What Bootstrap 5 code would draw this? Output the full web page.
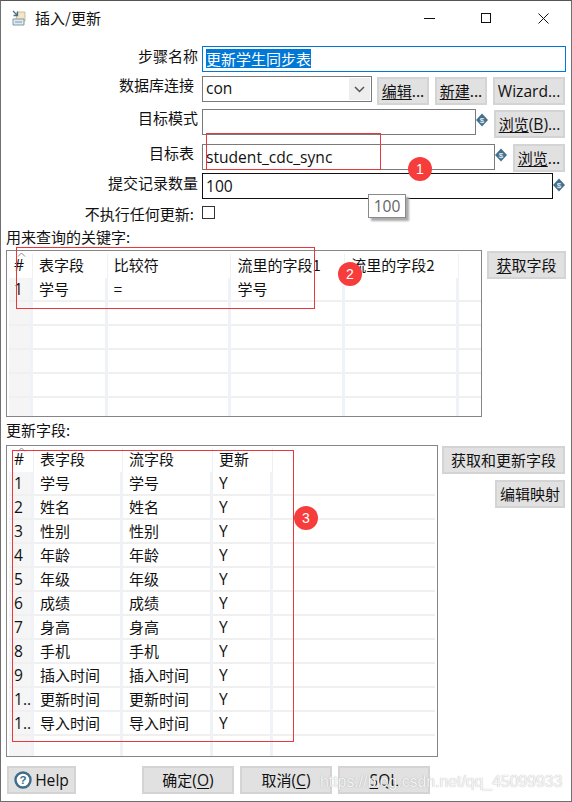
<!DOCTYPE html>
<html lang="zh">
<head>
<meta charset="utf-8">
<title>插入/更新</title>
<link href="https://cdn.jsdelivr.net/npm/bootstrap@5.3.0/dist/css/bootstrap.min.css" rel="stylesheet">
<style>
html,body{margin:0;background:#fff;}
body{font-family:"Noto Sans CJK SC","Open Sans",sans-serif;font-size:15px;line-height:20px;color:#111;overflow:hidden;}
.latin{font-family:"Open Sans","Noto Sans CJK SC",sans-serif;font-size:15.6px;}
.win{position:relative;width:572px;height:802px;border:1px solid #707070;border-top-color:#555;overflow:hidden;background:#fff;}
.tbar{height:45px;padding:9px 0 0 11px;}
.tbar .ttl{margin:-1px 0 0 8px;line-height:18px;font-size:15px;}
.ctl{margin-left:auto;padding:3px 22px 0 0;gap:46px;}
.frow{display:flex;align-items:flex-start;}
.lbl{text-align:right;white-space:nowrap;flex:none;}
.l198{width:197px;margin-right:4px;}
.l194{width:193px;margin-right:8px;}
.up1{margin-top:-1px;}
.up2{margin-top:-2px;}
.fld{height:26px;border:1px solid #7a7a7a;padding:0 3px;line-height:24px;white-space:nowrap;background:#fff;font-size:15px;}
.fld.latin{font-size:15.6px;}
.fld.combo{line-height:22px;}
.fld.act{border-color:#0078d7;}
.fld.blk{border-color:#111;}
.sel{background:#0078d7;color:#fff;display:inline-block;line-height:19px;}
.wbtn.btn{--bs-btn-border-radius:0;background:#e1e1e1;border:2px solid #d4d4d4;color:#111;font-size:15px;line-height:20px;padding:0;height:28px;flex:none;display:flex;align-items:center;justify-content:center;white-space:nowrap;}
.wbtn.btn.latin{font-size:15.6px;}
.wbtn u{text-underline-offset:2px;}
.combo{position:relative;width:170px;display:flex;justify-content:space-between;}
.carr{width:21px;height:22px;margin:1px -2px 0 0;background:#eee;display:flex;align-items:center;justify-content:center;}
.dia{flex:none;}
.r1{height:30px;}.r2{height:33px;}.r3{height:35px;}.r4{height:29px;}.r5{height:33px;}.r6{height:21px;}
.chk{width:13px;height:13px;border:1px solid #333;background:#fff;margin:0;flex:none;}
.sec{padding:0 0 0 5px;line-height:20px;}
.gridbox{position:relative;border:1px solid #85858a;background:#fff;overflow:hidden;flex:none;padding:3px 0 0 2px;}
.gridbox.tight{padding-top:2px;}
table.kt{border-collapse:separate;border-spacing:0;table-layout:fixed;margin:0;font-size:15px;}
table.kt th,table.kt td{padding:0 0 0 6px;font-weight:400;height:24px;line-height:22px;border-right:3px solid #eff2f7;border-bottom:2px solid #f0f0f0;white-space:nowrap;overflow:hidden;color:#111;}
table.kt th{border-bottom:0;border-right:1px solid #f0f0f0;line-height:22px;vertical-align:top;}
table.kt .n{background:#f5f5f5;padding-left:5px;font-family:"Open Sans",sans-serif;font-size:15.6px;}
table.kt th.n{background:#fff;}
table.kt td.y{font-family:"Open Sans",sans-serif;font-size:15.6px;}
table.kt td.e,table.kt th.e{border-right:0;}
.sortmk{position:absolute;left:10px;top:1px;}
.rect{position:absolute;border:1px solid #e8383d;pointer-events:none;}
.bdg{position:absolute;width:24px;height:24px;border-radius:50%;background:#f73c3c;color:#fff;font-size:14px;line-height:24px;text-align:center;font-family:"Liberation Sans",sans-serif;}
.tip{position:absolute;left:367px;top:193px;width:38px;height:24px;border:1px solid #8a8a8a;background:#fff;color:#666;text-align:center;line-height:22px;box-shadow:3px 3px 2px #aaa;}
.wm{position:absolute;left:319px;top:772px;font:15.8px "Liberation Sans",sans-serif;color:rgba(255,255,255,.9);text-shadow:0 0 1px rgba(120,120,120,.7);white-space:nowrap;}
.botbar{padding:0 0 0 6px;}
.bt92{width:92px;}
</style>
</head>
<body>
<div class="win d-flex flex-column">
  <div class="tbar d-flex">
    <svg width="15" height="17" viewBox="0 0 15 17"><path d="M5 2h8v9H4z" fill="#f1e6c8" stroke="#c9bd9a"/><path d="M1 9h11v6H1z" fill="#dfe9ee" stroke="#7f9bab"/><path d="M3 12h7" stroke="#7f9bab"/><path d="M1 1l4 4M5.500 1.500v4H1.500" fill="none" stroke="#4e6f84" stroke-width="1.300"/></svg>
    <span class="ttl">插入/更新</span>
    <div class="ctl d-flex">
      <svg width="11" height="11" viewBox="0 0 11 11"><path d="M0 5.500h11" stroke="#111"/></svg>
      <svg width="11" height="11" viewBox="0 0 11 11"><rect x=".5" y=".5" width="9" height="9" fill="none" stroke="#111"/></svg>
      <svg width="11" height="11" viewBox="0 0 11 11"><path d="M.5.5l10 10M10.500.5l-10 10" stroke="#111"/></svg>
    </div>
  </div>

  <div class="frow r1"><div class="lbl l198">步骤名称</div><div class="fld act" style="width:364px"><span class="sel">更新学生同步表</span></div></div>
  <div class="frow r2"><div class="lbl l194 up1">数据库连接</div><div class="fld combo latin"><span>con</span><span class="carr"><svg width="11" height="7" viewBox="0 0 11 7"><path d="M1 1l4.500 4.500L10 1" fill="none" stroke="#555" stroke-width="1.500"/></svg></span></div>
    <button class="btn wbtn" style="width:52px;margin:1px 0 0 5px"><span><u>编辑</u>...</span></button>
    <button class="btn wbtn" style="width:52px;margin:1px 0 0 6px"><span><u>新建</u>...</span></button>
    <button class="btn wbtn latin" style="width:72px;margin:1px 0 0 6px">Wizard...</button>
  </div>
  <div class="frow r3"><div class="lbl l198 up1">目标模式</div><div class="fld" style="width:274px"></div>
    <svg class="dia" style="margin:4px 0 0 0" width="12" height="14" viewBox="0 0 12 14"><path d="M6 .5l6 6.500-6 6.500-6-6.500z" fill="#43708f"/><text x="6" y="10" font-size="8" fill="#fff" text-anchor="middle" font-family="Liberation Sans">$</text></svg>
    <button class="btn wbtn" style="width:71px;margin:1px 0 0 6px"><span><u>浏览</u><span class="latin">(<u>B</u>)...</span></span></button>
  </div>
  <div class="frow r4"><div class="lbl l194 up1">目标表</div><div class="fld latin" style="width:293px">student_cdc_sync</div>
    <svg class="dia" style="margin:4px 0 0 0" width="12" height="14" viewBox="0 0 12 14"><path d="M6 .5l6 6.500-6 6.500-6-6.500z" fill="#43708f"/><text x="6" y="10" font-size="8" fill="#fff" text-anchor="middle" font-family="Liberation Sans">$</text></svg>
    <button class="btn wbtn" style="width:52px;margin-left:6px"><span><u>浏览</u>...</span></button>
  </div>
  <div class="frow r5"><div class="lbl l198">提交记录数量</div><div class="fld blk latin" style="width:351px">100</div>
    <svg class="dia" style="margin:5px 0 0 0" width="12" height="14" viewBox="0 0 12 14"><path d="M6 .5l6 6.500-6 6.500-6-6.500z" fill="#43708f"/><text x="6" y="10" font-size="8" fill="#fff" text-anchor="middle" font-family="Liberation Sans">$</text></svg>
  </div>
  <div class="frow r6"><div class="lbl l194 up2">不执行任何更新:</div><div class="chk"></div></div>

  <div class="sec" style="height:23px">用来查询的关键字:</div>
  <div class="d-flex align-items-start" style="padding-left:5px;height:179px">
    <div class="gridbox" style="width:476px;height:167px">
      <svg class="sortmk" width="9" height="5" viewBox="0 0 9 5"><path d="M1 4.500l3.500-3.500 3.500 3.500" fill="none" stroke="#888"/></svg>
      <table class="kt">
        <colgroup><col style="width:24px"><col style="width:75px"><col style="width:124px"><col style="width:114px"><col style="width:114px"><col style="width:22px"></colgroup>
        <tr><th class="n">#</th><th>表字段</th><th>比较符</th><th>流里的字段1</th><th>流里的字段2</th><th class="e"></th></tr>
        <tr><td class="n">1</td><td>学号</td><td>=</td><td>学号</td><td></td><td class="e"></td></tr>
        <tr><td class="n"></td><td></td><td></td><td></td><td></td><td class="e"></td></tr>
        <tr><td class="n"></td><td></td><td></td><td></td><td></td><td class="e"></td></tr>
        <tr><td class="n"></td><td></td><td></td><td></td><td></td><td class="e"></td></tr>
        <tr><td class="n"></td><td></td><td></td><td></td><td></td><td class="e"></td></tr>
        <tr><td class="n"></td><td></td><td></td><td></td><td></td><td class="e"></td></tr>
      </table>
    </div>
    <button class="btn wbtn" style="width:79px;margin:1px 0 0 5px"><span><u>获</u>取字段</span></button>
  </div>

  <div class="sec" style="height:14px;margin-top:-9px">更新字段:</div>
  <div class="d-flex align-items-start" style="padding-left:5px;margin-top:11px">
    <div class="gridbox tight" style="width:432px;height:312px">
      <svg class="sortmk" width="9" height="5" viewBox="0 0 9 5"><path d="M1 4.500l3.500-3.500 3.500 3.500" fill="none" stroke="#888"/></svg>
      <table class="kt">
        <colgroup><col style="width:24px"><col style="width:89px"><col style="width:90px"><col style="width:60px"><col style="width:162px"></colgroup>
        <tr><th class="n">#</th><th>表字段</th><th>流字段</th><th>更新</th><th class="e"></th></tr>
        <tr><td class="n">1</td><td>学号</td><td>学号</td><td class="y">Y</td><td class="e"></td></tr>
        <tr><td class="n">2</td><td>姓名</td><td>姓名</td><td class="y">Y</td><td class="e"></td></tr>
        <tr><td class="n">3</td><td>性别</td><td>性别</td><td class="y">Y</td><td class="e"></td></tr>
        <tr><td class="n">4</td><td>年龄</td><td>年龄</td><td class="y">Y</td><td class="e"></td></tr>
        <tr><td class="n">5</td><td>年级</td><td>年级</td><td class="y">Y</td><td class="e"></td></tr>
        <tr><td class="n">6</td><td>成绩</td><td>成绩</td><td class="y">Y</td><td class="e"></td></tr>
        <tr><td class="n">7</td><td>身高</td><td>身高</td><td class="y">Y</td><td class="e"></td></tr>
        <tr><td class="n">8</td><td>手机</td><td>手机</td><td class="y">Y</td><td class="e"></td></tr>
        <tr><td class="n">9</td><td>插入时间</td><td>插入时间</td><td class="y">Y</td><td class="e"></td></tr>
        <tr><td class="n">1..</td><td>更新时间</td><td>更新时间</td><td class="y">Y</td><td class="e"></td></tr>
        <tr><td class="n">1..</td><td>导入时间</td><td>导入时间</td><td class="y">Y</td><td class="e"></td></tr>
        <tr><td class="n"></td><td></td><td></td><td></td><td class="e"></td></tr>
      </table>
    </div>
    <div class="d-flex flex-column align-items-end" style="width:127px;gap:6px;margin-top:1px">
      <button class="btn wbtn" style="width:123px">获取和更新字段</button>
      <button class="btn wbtn" style="width:70px">编辑映射</button>
    </div>
  </div>

  <div class="botbar d-flex" style="margin-top:9px">
    <button class="btn wbtn latin" style="width:69px"><svg width="18" height="18" viewBox="0 0 18 18"><circle cx="9" cy="9" r="7.500" fill="#fff" stroke="#3e6c8c" stroke-width="2.400"/><text x="9" y="13.200" font-size="11.500" font-weight="700" fill="#3e6c8c" text-anchor="middle" font-family="Liberation Sans">?</text></svg><span style="margin-left:3px">Help</span></button>
    <button class="btn wbtn bt92" style="margin-left:66px"><span>确定<span class="latin">(<u>O</u>)</span></span></button>
    <button class="btn wbtn bt92" style="margin-left:6px"><span>取消<span class="latin">(<u>C</u>)</span></span></button>
    <button class="btn wbtn bt92 latin" style="margin-left:6px"><span><u>S</u>QL</span></button>
  </div>

  <div class="tip latin">100</div>
  <div class="rect" style="left:205px;top:132px;width:175px;height:37px"></div>
  <div class="bdg" style="left:407px;top:156px">1</div>
  <div class="rect" style="left:15px;top:246px;width:299px;height:62px"></div>
  <div class="bdg" style="left:337px;top:261px">2</div>
  <div class="rect" style="left:11px;top:449px;width:282px;height:292px"></div>
  <div class="bdg" style="left:293px;top:505px">3</div>
  <div class="wm">https://blog.csdn.net/qq_45099933</div>
</div>
<script src="https://cdn.jsdelivr.net/npm/bootstrap@5.3.0/dist/js/bootstrap.bundle.min.js"></script>
</body>
</html>
